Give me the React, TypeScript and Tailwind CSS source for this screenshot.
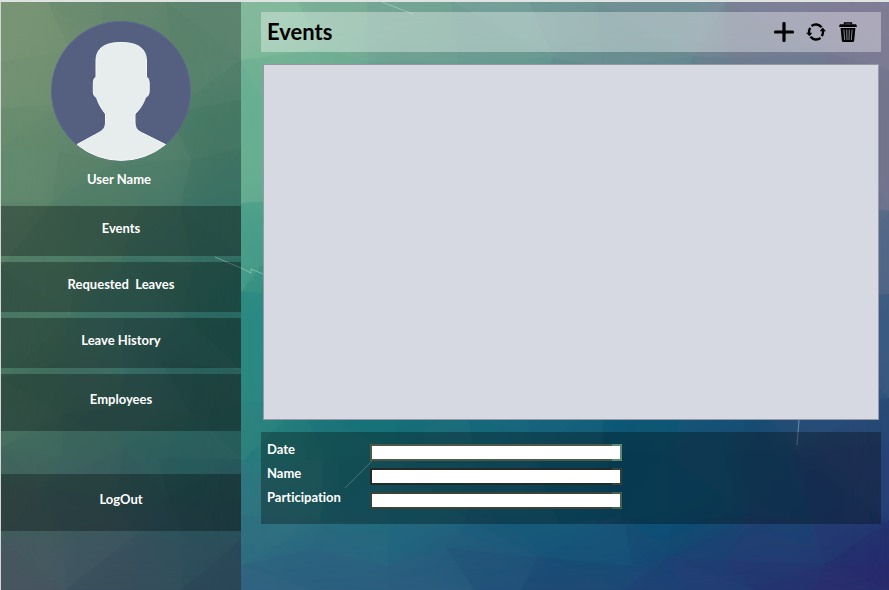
import React from "react";

type MeshProps = { id: string; width: number; height: number; xs: number[]; ys: number[]; colors: string[][]; glints: string[] };

const channel = (hex: string, i: number) => parseInt(hex.slice(1 + i * 2, 3 + i * 2), 16);

function blend(list: string[], shade: number) {
  const rgb = [0, 1, 2].map((i) =>
    Math.max(0, Math.min(255, Math.round(list.reduce((sum, c) => sum + channel(c, i), 0) / list.length + shade))),
  );
  return `rgb(${rgb.join(",")})`;
}

const wobble = (a: number, b: number) => {
  const v = Math.sin(a * 12.9898 + b * 78.233) * 43758.5453;
  return (v - Math.floor(v)) * 2 - 1;
};

/** Low-poly backdrop: a loose grid of vertices, each cell split into two facets, evened out by a soft copy on top. */
function Mesh({ id, width, height, xs, ys, colors, glints }: MeshProps) {
  const point = (r: number, c: number) => {
    const edgeX = c === 0 || c === xs.length - 1;
    const edgeY = r === 0 || r === ys.length - 1;
    const x = xs[c] + (edgeX ? 0 : wobble(r, c) * 20);
    const y = ys[r] + (edgeY ? 0 : wobble(c + 9, r) * 11);
    return `${x.toFixed(1)},${y.toFixed(1)}`;
  };
  const facets: { points: string; fill: string }[] = [];
  for (let r = 0; r < ys.length - 1; r++) {
    for (let c = 0; c < xs.length - 1; c++) {
      const flip = (r + c) % 2 === 0;
      const cells = flip
        ? [[[r, c], [r, c + 1], [r + 1, c]], [[r, c + 1], [r + 1, c + 1], [r + 1, c]]]
        : [[[r, c], [r, c + 1], [r + 1, c + 1]], [[r, c], [r + 1, c + 1], [r + 1, c]]];
      cells.forEach((tri, k) =>
        facets.push({
          points: tri.map(([a, b]) => point(a, b)).join(" "),
          fill: blend(tri.map(([a, b]) => colors[a][b]), wobble(r + k * 5, c + 3) * 3),
        }),
      );
    }
  }
  const shapes = facets.map((f, i) => (
    <polygon key={i} points={f.points} fill={f.fill} stroke={f.fill} strokeWidth="1" />
  ));
  return (
    <svg
      aria-hidden="true"
      className="absolute inset-0 -z-10 h-full w-full"
      viewBox={`0 0 ${width} ${height}`}
      preserveAspectRatio="none"
    >
      <filter id={id} x="0" y="0" width="1" height="1">
        <feGaussianBlur stdDeviation="18" edgeMode="duplicate" />
      </filter>
      <g>{shapes}</g>
      <g filter={`url(#${id})`} opacity="0.6">{shapes}</g>
      {glints.map((d) => (
        <path key={d} d={d} fill="none" stroke="#d5efe4" strokeOpacity="0.4" />
      ))}
    </svg>
  );
}

const sidebarMesh: MeshProps = {
  id: "sidebar-soft",
  width: 240,
  height: 588,
  xs: [0, 60, 120, 175, 240],
  ys: [0, 60, 105, 155, 200, 255, 310, 368, 410, 450, 490, 535, 588],
  glints: ["M214 255L240 266"],
  colors: [
    ["#809a7c", "#72906f", "#6b8c72", "#62866f", "#587e6a"],
    ["#7b9676", "#728f70", "#678a70", "#5c856e", "#527f6b"],
    ["#6f9070", "#688c6f", "#5f896e", "#56836c", "#4a7c6a"],
    ["#668b6f", "#62886d", "#57826c", "#4d7c69", "#38705f"],
    ["#62866b", "#5b846a", "#4e7c69", "#407364", "#397062"],
    ["#557f68", "#4c7c66", "#417464", "#397064", "#2b6a62"],
    ["#4a7c66", "#437564", "#397068", "#306a62", "#1f655e"],
    ["#47735f", "#40705f", "#386866", "#2f6662", "#275f5c"],
    ["#48715f", "#416b5c", "#376560", "#2c5f58", "#265a58"],
    ["#487062", "#3f6a62", "#36635f", "#2a5f5d", "#245a5b"],
    ["#43635a", "#405f5c", "#35595f", "#2a5559", "#264f58"],
    ["#465f5f", "#405c60", "#34555e", "#2c515c", "#254a57"],
    ["#48505f", "#454f60", "#384e5c", "#33485a", "#284658"],
  ],
};

const mainMesh: MeshProps = {
  id: "main-soft",
  width: 648,
  height: 588,
  xs: [0, 70, 145, 220, 300, 375, 440, 500, 570, 648],
  ys: [0, 58, 200, 300, 400, 450, 515, 555, 588],
  glints: ["M141 0L172 12", "M0 266L10 271V267L22 272", "M104 486L131 459", "M558 418L556 443"],
  colors: [
    ["#8bbca2", "#83b69b", "#7aaa98", "#75a398", "#739c99", "#73959a", "#76919a", "#7b8799", "#7f7c96", "#7e7994"],
    ["#80bb98", "#76b393", "#73ab94", "#70a094", "#6c9790", "#6a9090", "#6d8c92", "#747f90", "#7a7a92", "#787890"],
    ["#5dab90", "#55a28c", "#50988c", "#4b908a", "#48858a", "#467d88", "#4a7688", "#526f88", "#5e7088", "#707590"],
    ["#2b9083", "#2b8a82", "#288280", "#267b7e", "#21737c", "#206b7a", "#266679", "#30617a", "#3a5c7c", "#48628a"],
    ["#318880", "#1f7b7c", "#19747a", "#176c7a", "#14657a", "#105f78", "#145a78", "#1d5577", "#285078", "#2c4c78"],
    ["#35857f", "#1c757a", "#186c78", "#16667a", "#12607a", "#0d5876", "#0e5276", "#174d74", "#1e4872", "#284274"],
    ["#367485", "#256e7c", "#1b6a7c", "#1a627c", "#125c7a", "#0c5878", "#045272", "#154c74", "#1c4072", "#233472"],
    ["#306880", "#2b6480", "#28607e", "#235a7c", "#1f527a", "#194a76", "#1d4274", "#203c72", "#25306f", "#26286c"],
    ["#2f6080", "#305e80", "#2a5a7c", "#265278", "#214c78", "#1e4675", "#213c74", "#223670", "#252c6e", "#2a2468"],
  ],
};

function Avatar() {
  return (
    <svg viewBox="0 0 140 140" className="size-[140px] shrink-0" role="img" aria-label="User picture">
      <circle cx="70" cy="70" r="69.5" fill="#556080" stroke="#5c6890" />
      <path
        d="M26 123.500L48 111.500C52 109 54.500 107 54.500 101V93C50.500 88 47 82 45.500 76.500C43 75.500 42.300 73 42.300 70V63C42.300 59 43 57 45 56V40C45 27 54 21.500 70 21.500S95.500 27 95.500 40V56C97.500 57 98.200 59 98.200 63V70C98.200 73 97 75.500 94.500 76.500C92.500 83 88.500 89 84 93V101C84 107 86.500 109.500 90.500 111.500L114.500 123.500A69.500 69.500 0 0 1 26 123.500Z"
        fill="#e7eced"
        stroke="#f6f9f8"
      />
    </svg>
  );
}

function PlusIcon() {
  return (
    <svg viewBox="0 0 20 20" className="size-5" aria-hidden="true">
      <path d="M10 1.500V18.500M1.500 10H18.500" fill="none" stroke="#000" strokeWidth="3.200" strokeLinecap="round" />
    </svg>
  );
}

function RefreshIcon() {
  return (
    <svg viewBox="0 0 20 20" className="size-5" aria-hidden="true">
      <path d="M5.500 4A7.300 7.300 0 0 1 15.500 5.200M14.500 16A7.300 7.300 0 0 1 4.500 14.800" fill="none" stroke="#000" strokeWidth="2.500" />
      <path d="M3 11.500V10A7.200 7.200 0 0 1 4.300 5.800M17 8.500V10A7.200 7.200 0 0 1 15.700 14.200" fill="none" stroke="#000" strokeWidth="2.300" />
      <path d="M0 10.800H6.200L3.600 14.200ZM20 9.200H13.800L16.600 5.600Z" fill="#000" />
    </svg>
  );
}

function TrashIcon() {
  return (
    <svg viewBox="0 0 20 20" className="size-5" aria-hidden="true">
      <path d="M6.500 2.500V1H13.500V2.500" fill="none" stroke="#000" strokeWidth="1.400" />
      <path d="M2.500 2.200H17.500Q18.800 2.200 18.800 4V5H1.200V4Q1.200 2.200 2.500 2.200ZM2.600 6H17.400L16.200 18.500Q16 20 14.800 20H5.200Q4 20 3.800 18.500Z" fill="#000" />
      <path d="M5.900 7.500L6.700 18M8.700 7.500L9 18M11.300 7.500L11 18M14.100 7.500L13.300 18" fill="none" stroke="#8f95a0" strokeWidth="0.900" />
    </svg>
  );
}

const navItems = [
  { label: "Events", size: "h-[50px] pb-1.5" },
  { label: "Requested  Leaves", size: "h-[50px] pb-1.5" },
  { label: "Leave History", size: "h-[50px] pb-1.5" },
  { label: "Employees", size: "h-[57px] pb-2" },
];

const tools = [
  { label: "Add event", icon: <PlusIcon /> },
  { label: "Refresh", icon: <RefreshIcon /> },
  { label: "Delete event", icon: <TrashIcon /> },
];

const fields = [
  { id: "date", label: "Date", frame: "bg-[linear-gradient(to_right,#4b5a45_96%,#5f8a72_96%)]" },
  { id: "name", label: "Name", frame: "bg-[linear-gradient(to_right,#242b27_96%,#32443a_96%)]" },
  { id: "participation", label: "Participation", frame: "bg-[linear-gradient(to_right,#394436_96%,#46604e_96%)]" },
];

export default function App() {
  return (
    <div className="flex min-h-screen border-t-2 border-l border-t-[#dfe3e1] border-l-[#d5d5d5] font-['Lato','Liberation_Sans',sans-serif] text-[13px] leading-5 font-bold text-white [font-variant-ligatures:none]">
      <aside className="relative isolate flex w-60 shrink-0 flex-col overflow-hidden">
        <Mesh {...sidebarMesh} />
        <div className="flex h-[204px] flex-col items-center pt-[19px]">
          <Avatar />
          <p className="mt-2 pr-1">User Name</p>
        </div>
        <nav className="flex flex-col gap-1.5">
          {navItems.map((item) => (
            <button key={item.label} type="button" className={`${item.size} w-full bg-black/30 whitespace-pre`}>
              {item.label}
            </button>
          ))}
        </nav>
        <button type="button" className="mt-[43px] h-[57px] w-full bg-black/30 pb-2">
          LogOut
        </button>
      </aside>

      <main className="relative isolate flex min-w-0 flex-1 flex-col gap-3 overflow-hidden pt-2.5 pr-2 pl-5">
        <Mesh {...mainMesh} />
        <header className="flex h-10 items-center justify-between bg-white/35 pr-[17px] pl-1.5">
          <h1 className="text-[22px] leading-7 text-black">Events</h1>
          <div className="flex">
            {tools.map((tool) => (
              <button key={tool.label} type="button" aria-label={tool.label} className="flex size-8 items-center justify-center">
                {tool.icon}
              </button>
            ))}
          </div>
        </header>

        <section aria-label="Event list" className="mx-0.5 h-[356px] border border-[#9698a5] bg-[#d6d9e1]" />

        <form className="bg-black/30 px-1.5 pt-2 pb-3">
          {fields.map((field) => (
            <div key={field.id} className="flex h-6 items-center">
              <label htmlFor={field.id} className="w-[103px] shrink-0 pb-1.5">
                {field.label}
              </label>
              <span className={`flex w-[252px] p-0.5 ${field.frame}`}>
                <input id={field.id} type="text" className="h-[13px] w-full bg-white px-1 text-[11px] text-black outline-none" />
              </span>
            </div>
          ))}
        </form>
      </main>
    </div>
  );
}
